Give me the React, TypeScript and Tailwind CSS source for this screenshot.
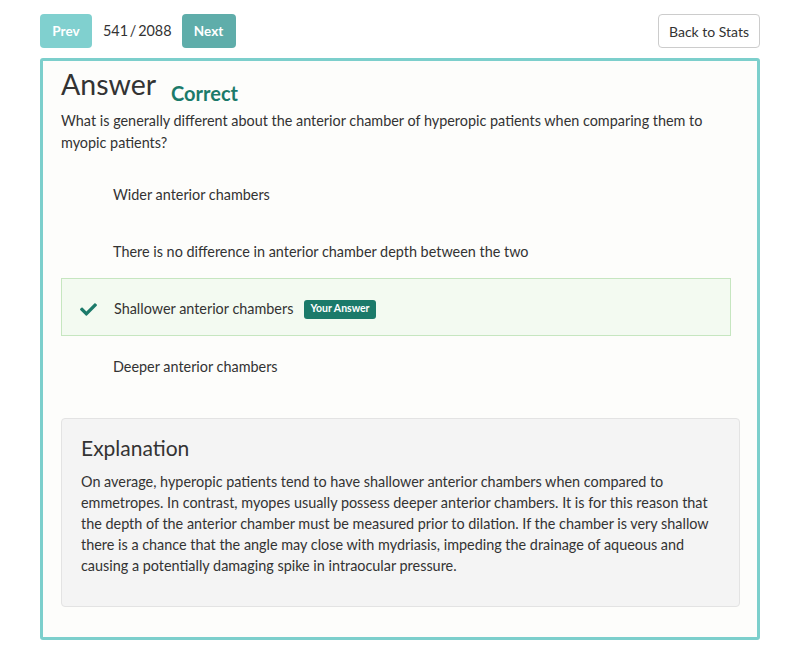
import React from "react";
import { FaCheck } from "react-icons/fa";

const options = [
  { text: "Wider anterior chambers", selected: false, h: "h-[57px]" },
  { text: "There is no difference in anterior chamber depth between the two", selected: false, h: "h-[55px] pt-[2px]" },
  { text: "Shallower anterior chambers", selected: true, h: "h-[58px] pt-[4px]" },
  { text: "Deeper anterior chambers", selected: false, h: "h-[58px] pt-[4px]" },
];

export default function App() {
  return (
    <div className="w-[800px] h-[664px] bg-white text-[#333] font-['Lato',sans-serif]">
      <div className="pl-[40px] pr-[40px] pt-[14px] flex items-center justify-between">
        <div className="flex items-center">
          <button className="h-[34px] w-[52px] rounded-[4px] bg-[#80d0cf] text-white font-bold text-[13.5px]">Prev</button>
          <span className="ml-[11px] mr-[10px] text-[14.4px]">541&thinsp;/&thinsp;2088</span>
          <button className="h-[34px] w-[54px] rounded-[4px] bg-[#5fadaa] text-white font-bold text-[13.5px]">Next</button>
        </div>
        <button className="h-[34px] w-[102px] rounded-[4px] border border-[#cccccc] bg-white text-[14px] text-[#333]">Back to Stats</button>
      </div>
      <div className="mt-[10px] ml-[40px] w-[720px] h-[582px] border-[3px] border-[#7ccfcc] rounded-[3px] bg-[#fdfdfb] px-[18px] pr-[17px] pt-[7px]">
        <div className="flex items-baseline">
          <h1 className="text-[28.5px] leading-[33px] font-normal">Answer</h1>
          <span className="ml-[15px] text-[20px] font-bold text-[#1b7a6a] relative top-[6px]">Correct</span>
        </div>
        <p className="text-[14.4px] leading-[22px] mt-[8px]">
          What is generally different about the anterior chamber of hyperopic patients when comparing them to myopic patients?
        </p>
        <div className="mt-[12px] mr-[9px]">
          {options.map((o, i) =>
            o.selected ? (
              <div key={i} className={`${o.h} flex items-center border border-[#c6e6c0] bg-[#f3faf1] text-[14.4px]`}>
                <FaCheck className="ml-[16px] text-[#1b7a6a] w-[21px] h-[17px]" />
                <span className="ml-[15px]">{o.text}</span>
                <span className="ml-[11px] h-[19px] px-[6px] rounded-[3px] bg-[#1b7a6a] text-white text-[10.5px] font-bold flex items-center">Your Answer</span>
              </div>
            ) : (
              <div key={i} className={`${o.h} flex items-center pl-[52px] text-[14.4px]`}>
                {o.text}
              </div>
            )
          )}
        </div>
        <div className="mt-[24px] border border-[#e3e3e3] rounded-[4px] bg-[#f4f4f4] pl-[19px] pr-[19px] pt-[16px] pb-[30px]">
          <h2 className="text-[21px] leading-[26px] font-normal">Explanation</h2>
          <p className="mt-[10px] text-[14.4px] leading-[21px]">
            On average, hyperopic patients tend to have shallower anterior chambers when compared to emmetropes. In contrast, myopes usually possess deeper anterior chambers. It is for this reason that the depth of the anterior chamber must be measured prior to dilation. If the chamber is very shallow there is a chance that the angle may close with mydriasis, impeding the drainage of aqueous and causing a potentially damaging spike in intraocular pressure.
          </p>
        </div>
      </div>
    </div>
  );
}
